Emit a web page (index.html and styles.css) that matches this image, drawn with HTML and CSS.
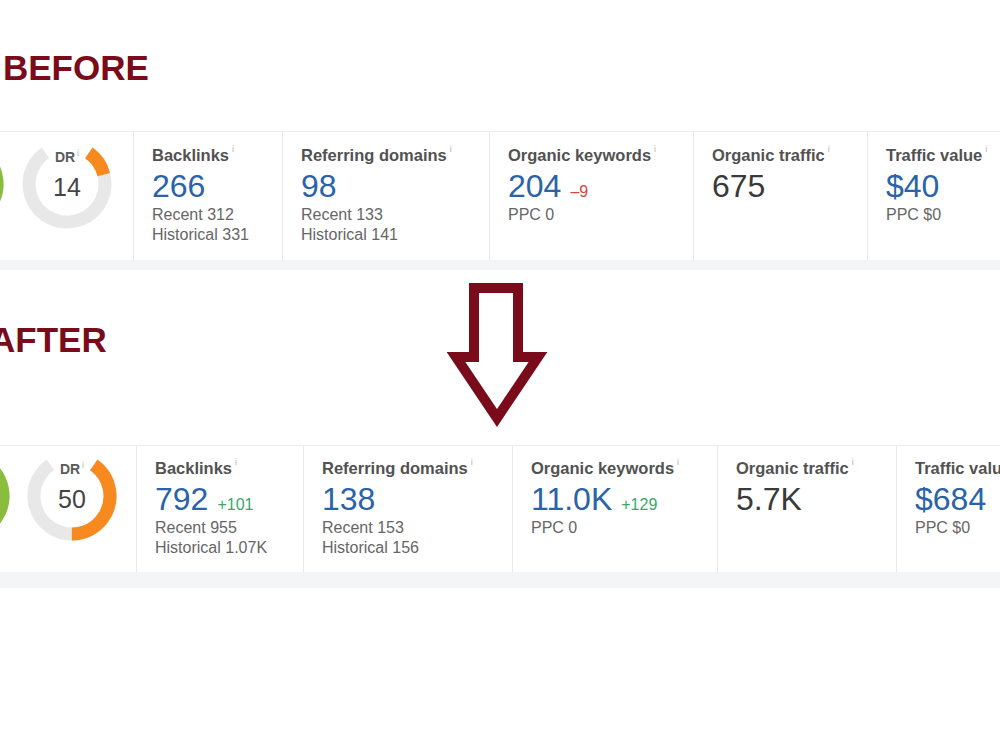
FILE: index.html
```html
<!DOCTYPE html>
<html lang="en">
<head>
  <meta charset="UTF-8">
  <meta name="viewport" content="width=device-width, initial-scale=1.0">
  <title>Site Explorer: Before / After</title>
  <link rel="stylesheet" href="styles.css">
</head>
<body>

<h1 class="stage stage-before">BEFORE</h1>

<!-- Overview strip, first snapshot -->
<div class="panel panel-before">
  <div class="metrics metrics-before">
    <div class="cell cell-gauges">
      <div class="gauge gauge-ur">
        <svg viewBox="0 0 96 96" width="96" height="96">
          <circle class="track" cx="48" cy="48" r="38" stroke-dasharray="192.3 238.8" transform="rotate(-55 48 48)"/>
          <circle class="arc arc-green" cx="48" cy="48" r="38" stroke-dasharray="120 238.8" transform="rotate(-55 48 48)"/>
        </svg>
      </div>
      <div class="gauge">
        <svg viewBox="0 0 96 96" width="96" height="96">
          <circle class="track" cx="48" cy="48" r="38" stroke-dasharray="192.3 238.8" transform="rotate(-55 48 48)"/>
          <circle class="arc arc-orange" cx="48" cy="48" r="38" stroke-dasharray="26.9 238.8" transform="rotate(-55 48 48)"/>
        </svg>
        <span class="gauge-label">DR<sup class="tip">i</sup></span>
        <span class="gauge-num">14</span>
      </div>
    </div>
    <div class="cell">
      <div class="label">Backlinks<sup class="tip">i</sup></div>
      <div class="value">266</div>
      <div class="sub">Recent 312</div>
      <div class="sub">Historical 331</div>
    </div>
    <div class="cell">
      <div class="label">Referring domains<sup class="tip">i</sup></div>
      <div class="value">98</div>
      <div class="sub">Recent 133</div>
      <div class="sub">Historical 141</div>
    </div>
    <div class="cell">
      <div class="label">Organic keywords<sup class="tip">i</sup></div>
      <div class="value">204<span class="delta down">–9</span></div>
      <div class="sub">PPC 0</div>
    </div>
    <div class="cell">
      <div class="label">Organic traffic<sup class="tip">i</sup></div>
      <div class="value value-plain">675</div>
    </div>
    <div class="cell">
      <div class="label">Traffic value<sup class="tip">i</sup></div>
      <div class="value">$40</div>
      <div class="sub">PPC $0</div>
    </div>
  </div>
</div>

<div class="between">
  <h1 class="stage stage-after">AFTER</h1>
  <!-- Hollow down arrow -->
  <svg class="arrow" viewBox="0 0 115 150" width="115" height="150">
    <path d="M34 10 H78 V79 H98 L57 140 L16 79 H34 Z"/>
  </svg>
</div>

<!-- Overview strip, second snapshot -->
<div class="panel panel-after">
  <div class="metrics metrics-after">
    <div class="cell cell-gauges">
      <div class="gauge gauge-ur">
        <svg viewBox="0 0 96 96" width="96" height="96">
          <circle class="track" cx="48" cy="48" r="38" stroke-dasharray="192.3 238.8" transform="rotate(-55 48 48)"/>
          <circle class="arc arc-green" cx="48" cy="48" r="38" stroke-dasharray="130 238.8" transform="rotate(-55 48 48)"/>
        </svg>
      </div>
      <div class="gauge">
        <svg viewBox="0 0 96 96" width="96" height="96">
          <circle class="track" cx="48" cy="48" r="38" stroke-dasharray="192.3 238.8" transform="rotate(-55 48 48)"/>
          <circle class="arc arc-orange" cx="48" cy="48" r="38" stroke-dasharray="96.2 238.8" transform="rotate(-55 48 48)"/>
        </svg>
        <span class="gauge-label">DR<sup class="tip">i</sup></span>
        <span class="gauge-num">50</span>
      </div>
    </div>
    <div class="cell">
      <div class="label">Backlinks<sup class="tip">i</sup></div>
      <div class="value">792<span class="delta up">+101</span></div>
      <div class="sub">Recent 955</div>
      <div class="sub">Historical 1.07K</div>
    </div>
    <div class="cell">
      <div class="label">Referring domains<sup class="tip">i</sup></div>
      <div class="value">138</div>
      <div class="sub">Recent 153</div>
      <div class="sub">Historical 156</div>
    </div>
    <div class="cell">
      <div class="label">Organic keywords<sup class="tip">i</sup></div>
      <div class="value">11.0K<span class="delta up">+129</span></div>
      <div class="sub">PPC 0</div>
    </div>
    <div class="cell">
      <div class="label">Organic traffic<sup class="tip">i</sup></div>
      <div class="value value-plain">5.7K</div>
    </div>
    <div class="cell">
      <div class="label">Traffic value<sup class="tip">i</sup></div>
      <div class="value">$684</div>
      <div class="sub">PPC $0</div>
    </div>
  </div>
</div>

</body>
</html>
```

FILE: styles.css
```css
body {
  font-family: 'Liberation Sans', Arial, sans-serif;
  background-color: #ffffff;
  margin: 0;
  overflow: hidden;
}

/* Section headings */
.stage {
  font-size: 35px;
  font-weight: bold;
  line-height: 40px;
  color: #7a0b1b;
  margin: 0;
  white-space: nowrap;
}

.stage-before {
  margin: 48px 0 0 3px;
}

.stage-after {
  margin: 50px 0 0 -10px;
}

/* Grey band under each strip */
.panel {
  background-color: #f4f5f7;
}

.panel-before {
  margin-top: 43px;
  padding-bottom: 10px;
}

.panel-after {
  padding-bottom: 16px;
}

.metrics {
  display: grid;
  column-gap: 1px;
  background-color: #e8e9eb;
  border-top: 1px solid #ededed;
  overflow: hidden;
}

.metrics-before {
  grid-template-columns: 133px 148px 206px 203px 173px 1fr;
}

.metrics-after {
  grid-template-columns: 136px 166px 208px 204px 178px 1fr;
}

.cell {
  background-color: #ffffff;
  padding: 13px 0 0 18px;
  height: 128px;
  box-sizing: border-box;
  white-space: nowrap;
  overflow: hidden;
}

.metrics-after .cell {
  padding-top: 12px;
  height: 126px;
}

.label {
  font-size: 16.5px;
  font-weight: bold;
  line-height: 20px;
  color: #525252;
}

.tip {
  font-size: 9px;
  font-weight: normal;
  line-height: 9px;
  color: #b3b3b3;
  vertical-align: top;
  margin-left: 3px;
}

.value {
  font-size: 32px;
  line-height: 36px;
  color: #2a63a8;
  margin: 3px 0 1px;
}

.value-plain {
  color: #3a3a3a;
}

.delta {
  font-size: 16px;
  line-height: 16px;
  margin-left: 9px;
}

.delta.up {
  color: #3ba66c;
}

.delta.down {
  color: #d2453f;
}

.sub {
  font-size: 16px;
  line-height: 20px;
  color: #666666;
}

/* DR / UR gauges */
.cell.cell-gauges {
  display: flex;
  gap: 12px;
  padding: 4px 0 0 0;
}

.metrics-after .cell.cell-gauges {
  gap: 11px;
  padding-top: 2px;
}

.gauge {
  display: grid;
  width: 96px;
  height: 96px;
  flex-shrink: 0;
}

.gauge > * {
  grid-area: 1 / 1;
}

.gauge-ur {
  margin-left: -89px;
}

.metrics-after .gauge-ur {
  margin-left: -83px;
}

.gauge circle {
  fill: none;
  stroke-width: 13;
}

.gauge .track {
  stroke: #e8e8e8;
}

.gauge .arc-orange {
  stroke: #f7891f;
}

.gauge .arc-green {
  stroke: #88be3c;
}

.gauge-label {
  justify-self: center;
  align-self: start;
  margin-top: 13px;
  font-size: 14px;
  font-weight: bold;
  line-height: 16px;
  color: #5a5a5a;
}

.gauge-label .tip {
  margin-left: 2px;
}

.gauge-num {
  justify-self: center;
  align-self: center;
  margin-top: 6px;
  font-size: 25px;
  line-height: 25px;
  color: #444444;
}

/* Space between the two strips */
.between {
  display: grid;
  grid-template-columns: 1fr auto 1fr;
  height: 175px;
}

.arrow {
  margin: 8px 5px 0 0;
}

.arrow path {
  fill: #ffffff;
  stroke: #7a0b1b;
  stroke-width: 10;
  stroke-linejoin: miter;
}
```
